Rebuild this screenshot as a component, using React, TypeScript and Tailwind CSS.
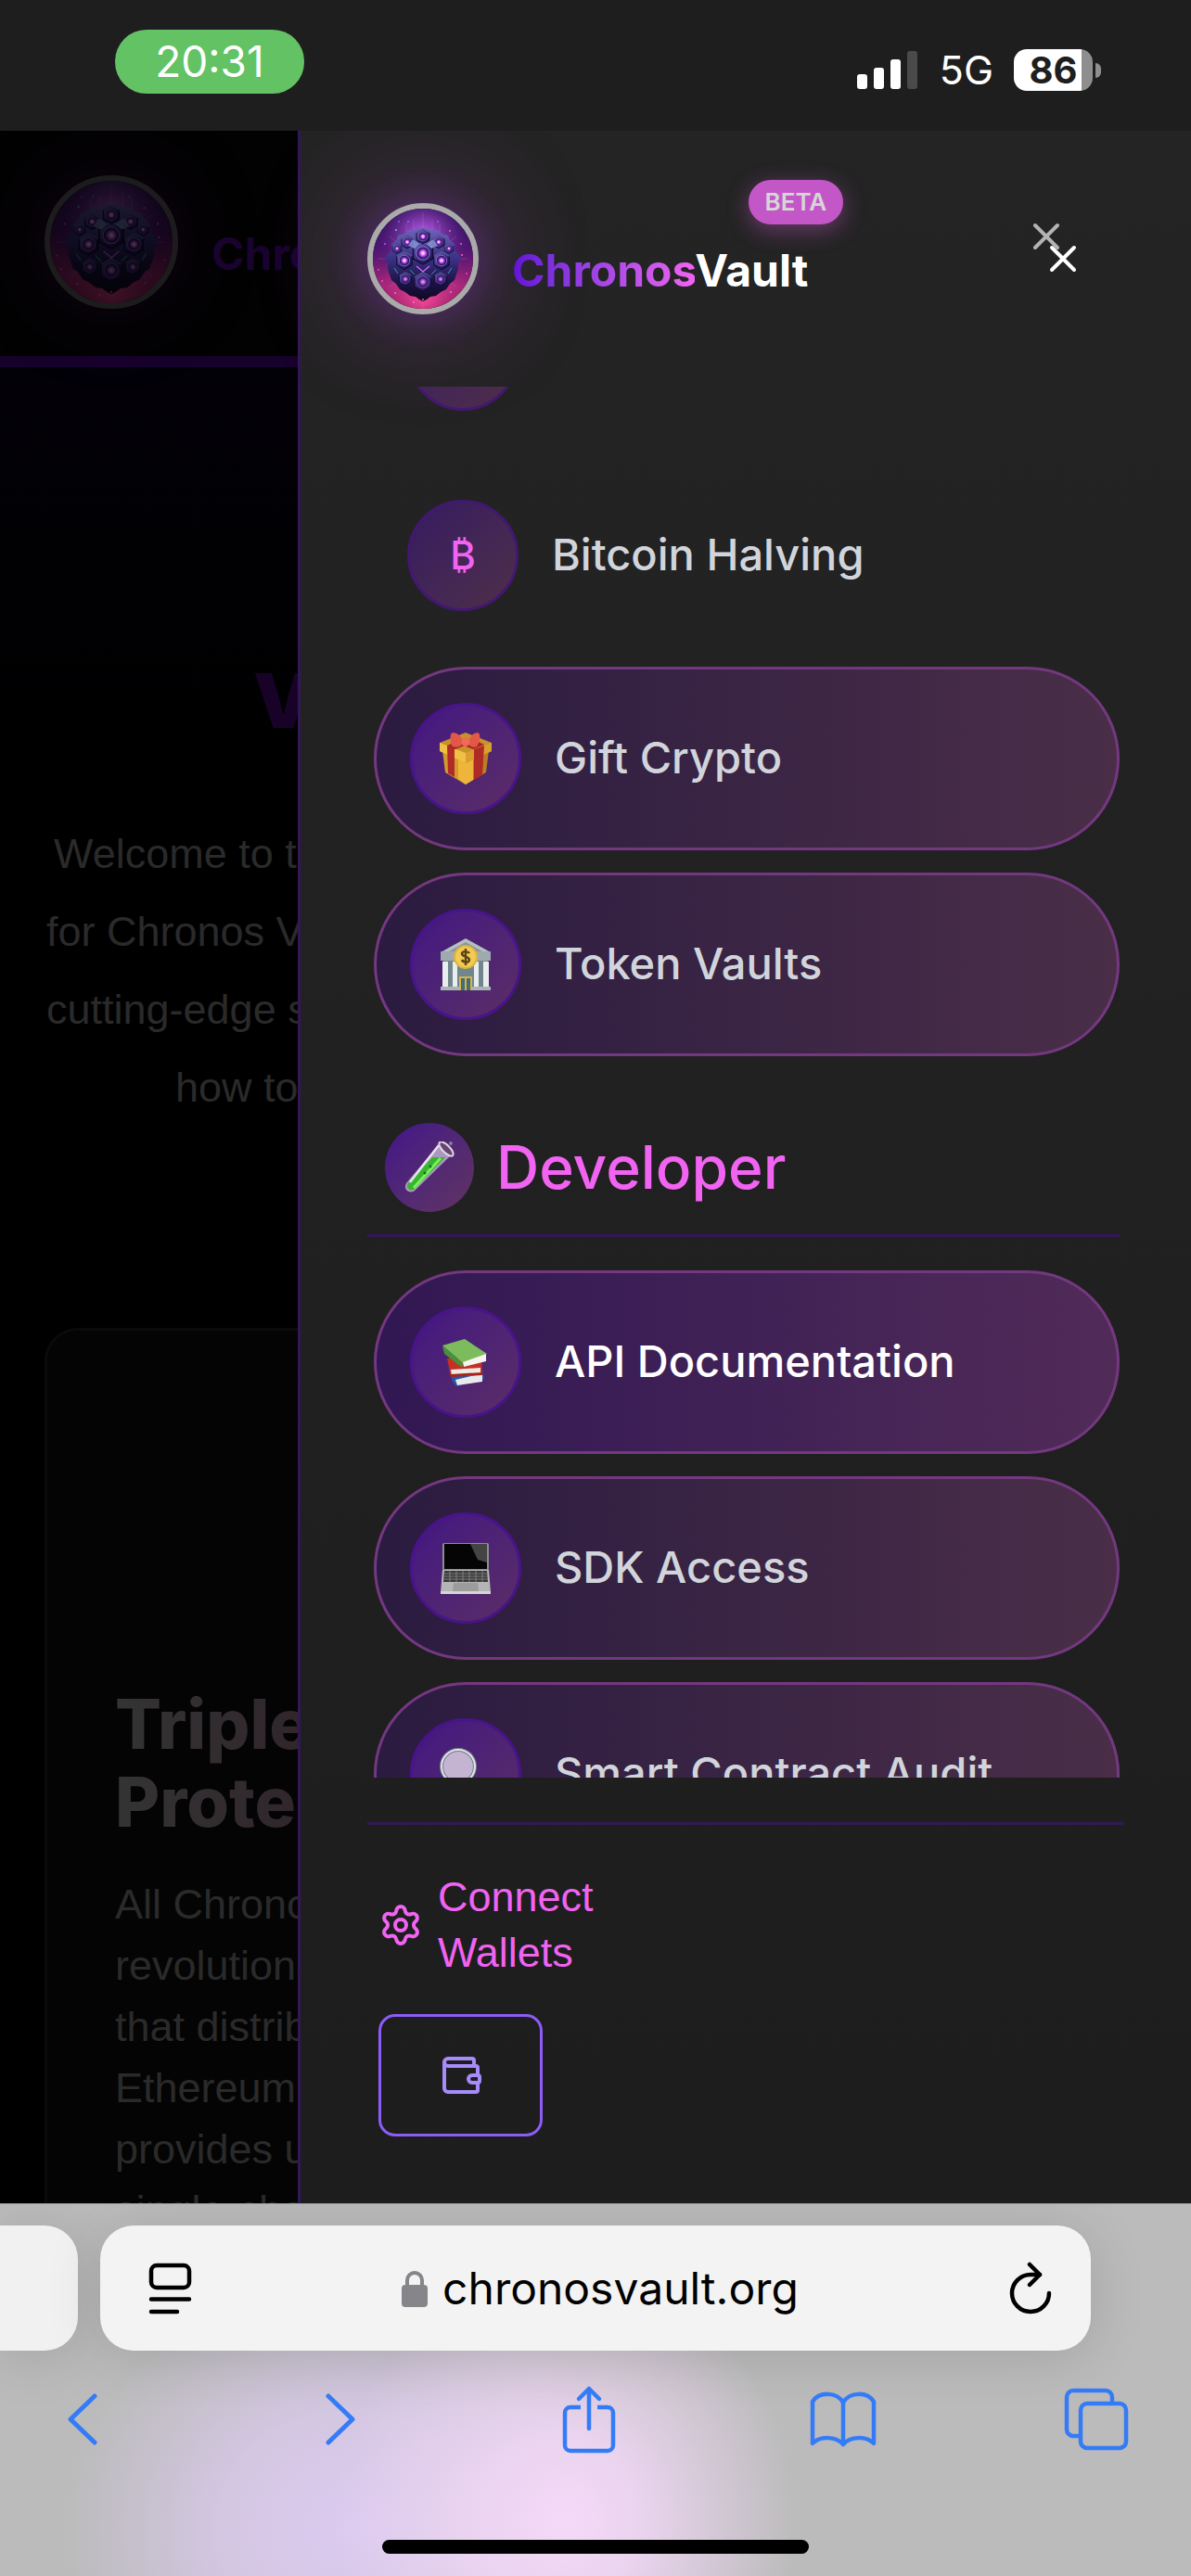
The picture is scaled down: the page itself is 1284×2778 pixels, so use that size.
import React from "react";
import { Settings, Wallet, X } from "lucide-react";

const HEX = "M0-10 8.7-5V5L0 10-8.7 5V-5Z";

function Orb({ id, className }: { id: string; className: string }) {
  const cells: [number, number, number][] = [
    [60, 54, 1.2], [40, 62, 0.95], [80, 62, 0.95], [60, 85, 1.05], [60, 36, 0.8], [41, 82, 0.75],
    [79, 82, 0.75], [43, 42, 0.7], [77, 42, 0.7], [32, 49, 0.55], [88, 49, 0.55],
  ];
  const sparks: [number, number, string][] = [
    [31, 29, "#5fd4ff"], [89, 30, "#ff6ad0"], [19, 44, "#c45bff"], [101, 44, "#ff6ad0"], [12, 72, "#ff4fb0"],
    [107, 76, "#ff4fb0"], [30, 97, "#ff7ad8"], [90, 96, "#ff7ad8"], [44, 20, "#a06bff"], [76, 20, "#a06bff"],
    [50, 107, "#ff7ad8"], [60, 104, "#ff6ad0"], [34, 20, "#8d5cff"], [102, 56, "#ff6ad0"], [16, 84, "#ff5fc0"],
  ];
  return (
    <svg viewBox="6 6 108 108" className={className} aria-hidden="true">
      <defs>
        <linearGradient id={id + "bg"} x1="0" y1="0" x2="0" y2="1">
          <stop offset="0" stopColor="#190d48" />
          <stop offset="0.4" stopColor="#4a1470" />
          <stop offset="0.75" stopColor="#a02678" />
          <stop offset="1" stopColor="#6a1849" />
        </linearGradient>
        <radialGradient id={id + "halo"} cx="0.5" cy="0.3" r="0.48">
          <stop offset="0" stopColor="#cf66ff" stopOpacity="1" />
          <stop offset="1" stopColor="#4a1470" stopOpacity="0" />
        </radialGradient>
        <radialGradient id={id + "low"} cx="0.5" cy="0.84" r="0.45">
          <stop offset="0" stopColor="#ff4a9c" stopOpacity="1" />
          <stop offset="1" stopColor="#c02a80" stopOpacity="0" />
        </radialGradient>
        <linearGradient id={id + "body"} x1="0" y1="0" x2="0" y2="1">
          <stop offset="0" stopColor="#7264ba" />
          <stop offset="0.4" stopColor="#3c3488" />
          <stop offset="0.75" stopColor="#1b1344" />
          <stop offset="1" stopColor="#120820" />
        </linearGradient>
        <linearGradient id={id + "cell"} gradientUnits="userSpaceOnUse" x1="-9" y1="-10" x2="9" y2="10">
          <stop offset="0" stopColor="#7a72c8" />
          <stop offset="0.5" stopColor="#382d7c" />
          <stop offset="1" stopColor="#191040" />
        </linearGradient>
        <radialGradient id={id + "dot"}>
          <stop offset="0" stopColor="#fff" />
          <stop offset="0.4" stopColor="#ee74ff" />
          <stop offset="1" stopColor="#8a2ae0" stopOpacity="0" />
        </radialGradient>
      </defs>
      <rect width="120" height="120" fill={"url(#" + id + "bg)"} />
      <rect width="120" height="120" fill={"url(#" + id + "halo)"} />
      <rect width="120" height="120" fill={"url(#" + id + "low)"} />
      <path d="M60 10V112M50 18V32M70 18V32M42 22V34M78 22V34M12 60H108M24 36 96 90M96 36 24 90" stroke="#e08cff" strokeWidth="0.5" opacity="0.45" />
      <path
        d="M60 27l5-1 4 3 7 0 4 4 7 2 2 5 5 4 0 7 4 4 3 5-3 4 0 7-2 6-2 6-5 4-4 6-6 3-5 4-6 1-4 3-4 2-4-2-4-3-6-1-5-4-6-3-4-6-5-4-2-6-2-6 0-7-3-4 3-5 4-4 0-7 5-4 2-5 7-2 4-4 7 0 4-3Z"
        fill={"url(#" + id + "body)"}
      />
      {cells.map(([x, y, s], i) => (
        <g key={i} transform={`translate(${x} ${y}) scale(${s})`} opacity={y > 80 ? 0.75 : 1}>
          <path d={HEX} fill={"url(#" + id + "cell)"} stroke="#120b33" strokeWidth="1.2" />
          <path d="M-8.700-5 0-10 8.700-5" fill="none" stroke="#8f96dc" strokeWidth="0.8" />
          <circle r="6" fill="#241860" stroke="#8a60d0" strokeWidth="1" />
          <circle r="5" fill={"url(#" + id + "dot)"} />
        </g>
      ))}
      <path d="M49 39l7 5-5 5-7-3ZM71 39l-7 5 5 5 7-3Z" fill="#8b9ad8" opacity="0.8" />
      <path d="M53 68l7 6 7-6" stroke="#e36bff" strokeWidth="1.2" fill="none" />
      <path d="M46 72l5 5M74 72l-5 5M29 70l4 6M91 70l-4 6" stroke="#4fc3d8" strokeWidth="1" fill="none" opacity="0.7" />
      {sparks.map(([x, y, c], i) => (
        <circle key={i} cx={x} cy={y} r="0.9" fill={c} />
      ))}
    </svg>
  );
}

function Gift() {
  return (
    <svg viewBox="0 0 56 56" className="size-14" aria-hidden="true">
      <path d="M3 19 28 31V56L6 43Z" fill="#d59a2c" />
      <path d="M53 19 28 31V56L50 43Z" fill="#b98022" />
      <path d="M20 27 36 27 36 51 28 56 20 50Z" fill="#efb53a" />
      <path d="M0 11 28 0 56 11V20L28 33 0 20Z" fill="#c8912a" />
      <path d="M0 11 28 22V33L0 20Z" fill="#efc043" />
      <path d="M56 11 28 22V33L56 20Z" fill="#d9a030" />
      <path d="M8 14 16 17V48L9 44ZM48 14 37 18V51L46 46Z" fill="#b02a26" />
      <path d="M8 14 24 7 34 11 17 18ZM48 13 38 8 26 14 36 18Z" fill="#a9231f" />
      <path d="M26 9C20-1 13-1 12 2c-1 5 0 11 2 13 4 2 9 0 12-4ZM30 9c6-10 12-10 13-7 1 5-1 11-3 13-4 2-8 0-10-4Z" fill="#e25848" />
      <ellipse cx="28" cy="10" rx="4.5" ry="5" fill="#f06a58" />
    </svg>
  );
}

function Bank() {
  return (
    <svg viewBox="0 0 56 56" className="size-14" aria-hidden="true">
      <path d="M28 0 55 15H1Z" fill="#b6c0c2" />
      <path d="M28 4 46 14H10Z" fill="#87979b" />
      <path d="M1 14H55V24H1Z" fill="#9eaaad" />
      <path d="M4 24H52V53H4Z" fill="#71868c" />
      <path d="M3 25h6v28H3ZM14 25h5v28h-5ZM37 25h5v28h-5ZM47 25h6v28h-6Z" fill="#e8edee" />
      <path d="M1 52H21V56H1ZM35 52H55V56H35Z" fill="#aab4b6" />
      <path d="M21 41H35V56H21Z" fill="#d9b342" />
      <path d="M23 43h4v13h-4ZM29 43h4v13h-4Z" fill="#3f6f7c" />
      <circle cx="28" cy="20" r="13" fill="#e0b438" />
      <circle cx="28" cy="20" r="11" fill="#f0cb55" />
      <path d="M32 16c-1-2-7-3-8 0-1 4 8 3 8 7 0 4-7 3-8 0M28 11v18" stroke="#5d4210" strokeWidth="2.4" fill="none" />
    </svg>
  );
}

function TestTube() {
  return (
    <svg viewBox="0 0 56 56" className="size-14" aria-hidden="true">
      <path d="M39 2 52 14 12 53C7 57-1 52 3 45Z" fill="#c9bfd8" fillOpacity="0.75" />
      <path d="M31 17H45L12 51C7 55 2 50 5 45Z" fill="#37b52f" />
      <path d="M40 18 11 50" stroke="#7cf05a" strokeWidth="3" />
      <path d="M38 4 7 44" stroke="#fff" strokeOpacity="0.75" strokeWidth="2.5" />
      <ellipse cx="46" cy="8" rx="4" ry="10" transform="rotate(-45 46 8)" fill="#68456f" stroke="#ded8e6" strokeWidth="2" />
      <circle cx="29" cy="27" r="1.4" fill="#0d6c16" />
      <circle cx="23" cy="34" r="1.4" fill="#0d6c16" />
      <circle cx="51" cy="2" r="2" fill="#8a7b98" />
    </svg>
  );
}

function Books() {
  return (
    <svg viewBox="0 0 56 56" className="size-14" aria-hidden="true">
      <path d="M5 22 14 49 18 54 48 46 46 38 12 44Z" fill="#2557a6" />
      <path d="M17 47 46 40V49L19 53Z" fill="#e9e9ee" />
      <path d="M8 24 12 43 46 41 45 24Z" fill="#c62f23" />
      <path d="M12 36 44 34V42L13 43Z" fill="#eeeae6" />
      <path d="M11 41 46 39 46 42 12 44Z" fill="#a82419" />
      <path d="M3 10 27 3 51 19 25 29Z" fill="#7cbc5c" />
      <path d="M3 10 25 29 24 34 5 19Z" fill="#4b8f3a" />
      <path d="M25 28 50 19V27L26 33Z" fill="#f4f4f0" />
    </svg>
  );
}

function Laptop() {
  return (
    <svg viewBox="0 0 56 56" className="size-14" aria-hidden="true">
      <rect x="3" y="1" width="50" height="30" rx="2" fill="#8d8d8d" />
      <rect x="5" y="2" width="46" height="27" fill="#050505" />
      <path d="M33 2H51V22L41 19Z" fill="#444" />
      <path d="M3 30H53L55 54H1Z" fill="#b5b5b5" />
      <path d="M5 31H51L52 43H4Z" fill="#3a3a3a" />
      <path d="M4 34H52M4 37H52M4 40H52M11 31v12M18 31v12M25 31v12M32 31v12M39 31v12M46 31v12" stroke="#8b8b8b" strokeWidth="0.8" />
      <path d="M15 44H41L42 53H14Z" fill="#9c9c9c" />
      <path d="M1 53H55V56H1Z" fill="#d5d5d5" />
    </svg>
  );
}

function Magnifier() {
  return (
    <svg viewBox="0 0 56 56" className="size-14" aria-hidden="true">
      <path d="M35 34 53 52" stroke="#222" strokeWidth="7" strokeLinecap="round" />
      <circle cx="20" cy="20" r="18" fill="#c4b4d2" stroke="#767b86" strokeWidth="4" />
      <circle cx="20" cy="20" r="18" fill="none" stroke="#dfe5ec" strokeWidth="2" />
    </svg>
  );
}

function NavItem({ label, icon, state = "soft" }: { label: string; icon: React.ReactNode; state?: "plain" | "soft" | "active" }) {
  const shell = {
    plain: "text-[#d1d5db]",
    soft: "border-3 border-[#743880] bg-linear-to-r from-[#2b1b40] to-[#4a2e48] text-[#d1d5db]",
    active: "border-3 border-[#743880] bg-linear-to-r from-[#311753] to-[#512b58] text-white",
  }[state];
  const disc =
    state === "plain"
      ? "border-[#421870] from-[#371a61] to-[#4f2e49]"
      : "border-[#48148a] from-[#431482] to-[#5b2c65]";
  return (
    <li className="shrink-0">
      <a href="#" className={"flex items-center gap-9 rounded-full p-9 text-[47px] leading-[58px] font-medium " + shell}>
        <span className={"flex size-[120px] shrink-0 items-center justify-center rounded-full border-3 bg-linear-to-br " + disc}>
          {icon}
        </span>
        <span className="pb-0.5 whitespace-nowrap">{label}</span>
      </a>
    </li>
  );
}

function StatusBar() {
  return (
    <header className="flex h-[141px] shrink-0 items-start justify-between bg-[#1e1e1e] pr-[97px] pl-[124px] text-white">
      <div className="mt-8 flex h-[69px] w-[204px] items-center justify-center rounded-[34px] bg-[#63c264] text-[46px]">20:31</div>
      <div className="mt-[53px] flex h-[45px] items-center">
        <div className="mr-6 flex h-[41px] items-end gap-[7px]" role="img" aria-label="Signal strength">
          <span className="h-4 w-[11px] rounded-[3px] bg-white" />
          <span className="h-[23px] w-[11px] rounded-[3px] bg-white" />
          <span className="h-8 w-[11px] rounded-[3px] bg-white" />
          <span className="h-[41px] w-[11px] rounded-[3px] bg-[#4a4a4a]" />
        </div>
        <span className="mr-[22px] text-[43px] leading-none">5G</span>
        <div className="flex h-[45px] w-[85px] items-center justify-center rounded-[14px] bg-linear-to-r from-white from-86% to-[#8e8e8e] to-86% text-[40px] font-bold text-[#1e1e1e]">
          86
        </div>
        <span className="ml-[3px] h-4 w-[6px] rounded-r-full bg-[#8e8e8e]" />
      </div>
    </header>
  );
}

function BackgroundPage() {
  return (
    <div className="h-full w-1/4 overflow-hidden bg-black whitespace-nowrap">
      <div className="flex h-[255px] items-start gap-9 border-b-12 border-[#17022c] bg-[#020202] pl-12">
        <div className="mt-12 size-36 shrink-0 overflow-hidden rounded-full border-6 border-[#1c1c1c] bg-black shadow-[0_0_100px_rgba(80,20,110,0.2)]">
          <Orb id="page" className="size-full opacity-25" />
        </div>
        <span className="mt-[103px] font-[Inter,sans-serif] text-[48px] leading-[60px] font-bold text-[#19032f]">Chronos</span>
      </div>
      <div className="bg-linear-to-b from-[#030108] to-black">
        <h1 className="pt-[315px] pl-[273px] font-[Inter,sans-serif] text-[81px] leading-[90px] font-black text-[#190228]">V</h1>
        <p className="mt-[78px] flex flex-col pl-[50px] text-[45px] leading-[84px] text-[#2a2a2a]">
          <span className="pl-2">Welcome to the</span>
          <span>for Chronos Vault</span>
          <span>cutting-edge security</span>
          <span className="pl-[139px]">how to</span>
        </p>
      </div>
      <article className="mt-[217px] ml-12 w-[1188px] rounded-[36px] border-3 border-[#0a0a0a] bg-[#040404] px-[73px] pt-[382px] pb-20">
        <h2 className="w-[500px] bg-linear-to-r from-[#343434] to-[#28101f] bg-clip-text font-[Inter,sans-serif] text-[74px] leading-[84px] font-extrabold text-transparent">
          Triple
          <br />
          Protection
        </h2>
        <p className="mt-9 text-[45px] leading-[66px] text-[#2a2a2a]">
          All Chronos
          <br />
          revolutionary
          <br />
          that distributes
          <br />
          Ethereum
          <br />
          provides unique
          <br />
          single-chain
        </p>
      </article>
    </div>
  );
}

function Drawer() {
  return (
    <aside className="absolute inset-y-0 right-0 flex w-3/4 flex-col border-l-3 border-[#321857] bg-linear-to-b from-[#242424] to-[#1d1d1d] px-[72px] font-[Inter,sans-serif]">
      <div className="flex h-[276px] shrink-0 items-start">
        <div className="mt-[78px] size-[120px] shrink-0 overflow-hidden rounded-full border-6 border-[#aaaaaa] shadow-[0_0_45px_rgba(130,50,190,0.4),0_0_120px_rgba(190,80,220,0.45)]">
          <Orb id="menu" className="size-full" />
        </div>
        <div className="relative mt-[121px] ml-9 text-[48px] leading-[60px] font-bold text-white">
          <span className="bg-linear-to-r from-[#6212d6] to-[#f163f1] bg-clip-text text-transparent">Chronos</span>Vault
          <span className="absolute -top-[68px] -right-[38px] flex h-12 items-center rounded-full bg-[#c457c8] px-[18px] text-[26px] font-semibold text-[#d6d6d6] shadow-[0_6px_24px_rgba(196,87,200,0.45)]">
            BETA
          </span>
        </div>
        <div className="relative mt-[90px] mr-[60px] ml-auto">
          <button aria-label="Close menu" className="flex size-12 items-center justify-center text-[#b4b4b4]">
            <X className="size-12" strokeWidth={2} />
          </button>
          <button aria-label="Close" className="absolute top-6 left-[18px] flex size-12 items-center justify-center text-white">
            <X className="size-12" strokeWidth={2} />
          </button>
        </div>
      </div>

      <nav className="min-h-0 flex-1 overflow-hidden pr-[5px]">
        <ul className="-mt-[130px] flex flex-col gap-6 pl-[7px]">
          <NavItem state="plain" label="" icon={null} />
          <NavItem
            state="plain"
            label="Bitcoin Halving"
            icon={<span className="text-[42px] font-medium text-[#f163f1]">₿</span>}
          />
          <NavItem label="Gift Crypto" icon={<Gift />} />
          <NavItem label="Token Vaults" icon={<Bank />} />
        </ul>
        <h2 className="mt-[72px] flex items-center gap-6 border-b-3 border-[#321857] pb-6 pl-[19px] text-[64px] leading-[72px] font-medium text-[#f163f1]">
          <span className="flex size-24 items-center justify-center rounded-full bg-linear-to-br from-[#431189] to-[#623260]">
            <TestTube />
          </span>
          Developer
        </h2>
        <ul className="mt-9 flex flex-col gap-6 pl-[7px]">
          <NavItem state="active" label="API Documentation" icon={<Books />} />
          <NavItem label="SDK Access" icon={<Laptop />} />
          <NavItem label="Smart Contract Audit" icon={<Magnifier />} />
        </ul>
      </nav>

      <div className="mt-12 shrink-0 border-t-3 border-[#321857] pt-12 pb-[72px] pl-3 font-['Liberation_Sans',sans-serif]">
        <a href="#" className="flex items-center gap-4 text-[45px] leading-[60px] text-[#f163f1]">
          <Settings className="size-12" strokeWidth={2} />
          <span>
            Connect
            <br />
            Wallets
          </span>
        </a>
        <button aria-label="Connect wallet" className="mt-9 flex h-[132px] w-[177px] items-center justify-center rounded-[18px] border-3 border-[#8b5cf6] text-[#a78bfa]">
          <Wallet className="size-12" strokeWidth={2} />
        </button>
      </div>
    </aside>
  );
}

function ToolButton({ label, children }: { label: string; children: React.ReactNode }) {
  return (
    <button aria-label={label} className="flex w-18 justify-center">
      {children}
    </button>
  );
}

function BrowserBar() {
  return (
    <footer className="flex h-[402px] shrink-0 flex-col border-t border-[#999] bg-[#bbbbbb] bg-[radial-gradient(ellipse_250px_270px_at_610px_340px,#f5daf8_0%,rgba(240,215,245,0.85)_35%,rgba(187,187,187,0)_100%),radial-gradient(ellipse_310px_270px_at_380px_350px,#dccaf0_0%,rgba(218,202,236,0.8)_45%,rgba(187,187,187,0)_100%)]">
      <div className="mt-[23px] flex h-[135px] shrink-0 gap-6 pr-[108px]">
        <div className="w-21 rounded-r-[36px] bg-[#f1f1f1] shadow-[0_6px_60px_rgba(0,0,0,0.13)]" />
        <div className="flex flex-1 items-center justify-between rounded-[36px] bg-[#f3f3f3] pr-10 pl-[50px] text-black shadow-[0_6px_60px_rgba(0,0,0,0.13)]">
          <button aria-label="Page options">
            <svg viewBox="0 0 50 56" className="h-14 w-[50px]" fill="none" stroke="currentColor" strokeWidth="4.5" strokeLinecap="round">
              <rect x="5" y="3" width="41" height="24" rx="6" />
              <path d="M5 39.500H46M5 53H33" />
            </svg>
          </button>
          <div className="flex items-center gap-4">
            <svg viewBox="0 0 28 40" className="h-10 w-7" aria-hidden="true">
              <path d="M6 18V11a8 8 0 0 1 16 0v7" fill="none" stroke="#86868a" strokeWidth="4" />
              <rect y="16" width="28" height="24" rx="4" fill="#86868a" />
            </svg>
            <span className="text-[48px] leading-[60px]">chronosvault.org</span>
          </div>
          <button aria-label="Reload">
            <svg viewBox="0 0 50 58" className="h-[58px] w-[50px]" fill="none" stroke="currentColor" strokeWidth="4.500" strokeLinecap="round" strokeLinejoin="round">
              <path d="M45 34a20 20 0 1 1-20-20h10" />
              <path d="M24 3 35 14 24 25" />
            </svg>
          </button>
        </div>
      </div>
      <div className="mt-8 flex h-[84px] items-center justify-between pr-[66px] pl-[52px] text-[#347cf7]">
        <ToolButton label="Back">
          <svg viewBox="0 0 34 56" className="h-14 w-[34px]" fill="none" stroke="currentColor" strokeWidth="5" strokeLinecap="round" strokeLinejoin="round">
            <path d="M31 3 5 28 31 53" />
          </svg>
        </ToolButton>
        <ToolButton label="Forward">
          <svg viewBox="0 0 34 56" className="ml-3 h-14 w-[34px]" fill="none" stroke="currentColor" strokeWidth="5" strokeLinecap="round" strokeLinejoin="round">
            <path d="M3 3 29 28 3 53" />
          </svg>
        </ToolButton>
        <ToolButton label="Share">
          <svg viewBox="0 0 58 74" className="h-[74px] w-[58px]" fill="none" stroke="currentColor" strokeWidth="4.500" strokeLinecap="round" strokeLinejoin="round">
            <path d="M20 24H9a6 6 0 0 0-6 6V65a6 6 0 0 0 6 6H49a6 6 0 0 0 6-6V30a6 6 0 0 0-6-6H38" strokeLinecap="butt" />
            <path d="M29 47V4M18 15 29 4 40 15" />
          </svg>
        </ToolButton>
        <ToolButton label="Bookmarks">
          <svg viewBox="0 0 72 60" className="h-[60px] w-[72px]" fill="none" stroke="currentColor" strokeWidth="4.500" strokeLinecap="round" strokeLinejoin="round">
            <path d="M36 12C29 0 10 0 3 11V56C11 48 28 48 36 57 44 48 61 48 69 56V11C62 0 43 0 36 12ZV57" />
          </svg>
        </ToolButton>
        <ToolButton label="Tabs">
          <svg viewBox="0 0 70 68" className="h-[68px] w-[70px]" fill="none" stroke="currentColor" strokeWidth="4.500">
            <path d="M18 52H10a7 7 0 0 1-7-7V10a7 7 0 0 1 7-7H45a7 7 0 0 1 7 7V17" />
            <rect x="18" y="17" width="49" height="48" rx="7" />
          </svg>
        </ToolButton>
      </div>
      <div className="mt-auto mb-6 h-[15px] w-[460px] self-center rounded-full bg-black" />
    </footer>
  );
}

export default function App() {
  return (
    <div className="flex h-screen flex-col overflow-hidden bg-black font-[Inter,sans-serif]">
      <StatusBar />
      <main className="relative min-h-0 flex-1 overflow-hidden font-['Liberation_Sans',sans-serif]">
        <BackgroundPage />
        <Drawer />
      </main>
      <BrowserBar />
    </div>
  );
}
